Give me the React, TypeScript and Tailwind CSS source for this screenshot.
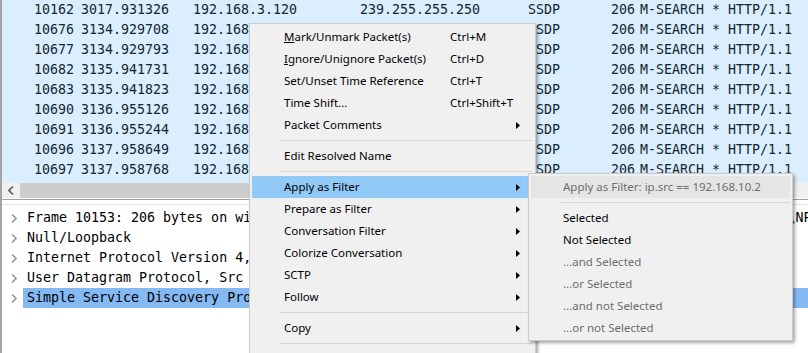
const packets = [
  ["10162", "3017.931326", "192.168.3.120"],
  ["10676", "3134.929708", "192.168.10.2"],
  ["10677", "3134.929793", "192.168.10.2"],
  ["10682", "3135.941731", "192.168.10.2"],
  ["10683", "3135.941823", "192.168.10.2"],
  ["10690", "3136.955126", "192.168.10.2"],
  ["10691", "3136.955244", "192.168.10.2"],
  ["10696", "3137.958649", "192.168.10.2"],
  ["10697", "3137.958768", "192.168.10.2"],
];

const tree = [
  "Frame 10153: 206 bytes on wire (1648 bits), 206 bytes captured (1648 bits) on interface \\Device\\NPF_Loopback, id 0",
  "Null/Loopback",
  "Internet Protocol Version 4, Src: 192.168.10.2, Dst: 239.255.255.250",
  "User Datagram Protocol, Src Port: 62240, Dst Port: 1900",
  "Simple Service Discovery Protocol",
];

type Item =
  | { sep: true }
  | { label: React.ReactNode; shortcut?: string; sub?: boolean; active?: boolean };

const menu: Item[] = [
  { label: <><span className="underline">M</span>ark/Unmark Packet(s)</>, shortcut: "Ctrl+M" },
  { label: <><span className="underline">I</span>gnore/Unignore Packet(s)</>, shortcut: "Ctrl+D" },
  { label: "Set/Unset Time Reference", shortcut: "Ctrl+T" },
  { label: "Time Shift...", shortcut: "Ctrl+Shift+T" },
  { label: "Packet Comments", sub: true },
  { sep: true },
  { label: "Edit Resolved Name" },
  { sep: true },
  { label: "Apply as Filter", sub: true, active: true },
  { label: "Prepare as Filter", sub: true },
  { label: "Conversation Filter", sub: true },
  { label: "Colorize Conversation", sub: true },
  { label: "SCTP", sub: true },
  { label: "Follow", sub: true },
  { sep: true },
  { label: "Copy", sub: true },
  { sep: true },
  { label: "Protocol Preferences", sub: true },
];

const subItems = [
  { label: "Selected", enabled: true },
  { label: "Not Selected", enabled: true },
  { label: "...and Selected", enabled: false },
  { label: "...or Selected", enabled: false },
  { label: "...and not Selected", enabled: false },
  { label: "...or not Selected", enabled: false },
];

function Arrow() {
  return (
    <svg width="4" height="7" viewBox="0 0 4 7" className="shrink-0">
      <path d="M0 0 L4 3.5 L0 7 Z" fill="#000" />
    </svg>
  );
}

function Chevron({ left }: { left?: boolean }) {
  return (
    <svg width="6" height="9" viewBox="0 0 6 9">
      <path
        d={left ? "M5 0.5 L1 4.5 L5 8.5" : "M1 0.5 L5 4.5 L1 8.5"}
        fill="none"
        stroke={left ? "#5a5a5a" : "#9a9a9a"}
        strokeWidth="1.6"
      />
    </svg>
  );
}

export default function App() {
  const mono = "font-['DejaVu_Sans_Mono',monospace] text-[13.3px]";
  const ui = "font-['Noto_Sans',sans-serif] text-[11.5px]";

  return (
    <div className="relative h-[353px] w-[808px] overflow-hidden bg-white">
      <div className="flex h-full flex-col border-l-2 border-[#a3a3a3]">
        {/* packet list */}
        <div className={`h-[183px] overflow-hidden bg-[#daeeff] text-[#12272e] ${mono}`}>
          {packets.map((p) => (
            <div
              key={p[0]}
              className="grid h-5 grid-cols-[72px_119px_167px_168px_83px_29px_1fr] items-center whitespace-nowrap"
            >
              <span className="text-right">{p[0]}</span>
              <span className="pl-[7px]">{p[1]}</span>
              <span>{p[2]}</span>
              <span>239.255.255.250</span>
              <span>SSDP</span>
              <span>206</span>
              <span>M-SEARCH * HTTP/1.1</span>
            </div>
          ))}
        </div>

        {/* horizontal scrollbar */}
        <div className="flex h-[15px] items-center bg-[#f0f0f0]">
          <div className="flex w-[18px] justify-center">
            <Chevron left />
          </div>
          <div className="h-full w-[680px] bg-[#cdcdcd]" />
        </div>

        {/* splitter */}
        <div className="mt-px h-[6px] border-t border-b border-t-[#a0a0a0] border-b-[#e3e3e3] bg-white" />

        {/* details tree */}
        <div className={`flex-1 pt-[3px] text-black ${mono}`}>
          {tree.map((t, i) => (
            <div key={t} className="flex h-5 items-center whitespace-nowrap">
              <div className="flex w-[21px] justify-center pl-[2px]">
                <Chevron />
              </div>
              <div
                className={`flex h-full flex-1 items-center overflow-hidden pl-[4px] ${
                  i === 4 ? "bg-[#84b9f3]" : ""
                }`}
              >
                {t}
              </div>
            </div>
          ))}
        </div>
      </div>

      {/* context menu */}
      <div
        className={`absolute left-[249px] top-[23px] w-[287px] border border-[#cccccc] bg-[#f0f0f0] pt-[2px] shadow-[2px_2px_3px_rgba(0,0,0,0.35)] ${ui}`}
      >
        {menu.map((m, i) =>
          "sep" in m ? (
            <div key={i} className="h-[9px] pt-[4px] pl-[30px] pr-[3px]">
              <div className="h-px bg-[#d5d5d5]" />
            </div>
          ) : (
            <div
              key={i}
              className={`mx-[2px] flex h-[22px] items-center whitespace-nowrap pl-[32px] pr-[13px] text-black ${
                m.active ? "bg-[#91c9f7]" : ""
              }`}
            >
              <span className="w-[166px]">{m.label}</span>
              <span className="flex-1">{m.shortcut}</span>
              {m.sub && <Arrow />}
            </div>
          )
        )}
      </div>

      {/* submenu */}
      <div
        className={`absolute left-[528px] top-[173px] h-[168px] w-[265px] border border-[#cccccc] bg-[#f0f0f0] pt-[2px] shadow-[2px_2px_3px_rgba(0,0,0,0.35)] ${ui}`}
      >
        <div className="mx-[2px] flex h-[22px] items-center whitespace-nowrap bg-[#e5e5e5] pl-[32px] text-[#6d6d6d]">
          Apply as Filter: ip.src == 192.168.10.2
        </div>
        <div className="h-[9px] pt-[4px] pl-[30px] pr-[2px]">
          <div className="h-px bg-[#d5d5d5]" />
        </div>
        {subItems.map((s) => (
          <div
            key={s.label}
            className={`mx-[2px] flex h-[22px] items-center whitespace-nowrap pl-[32px] ${
              s.enabled ? "text-black" : "text-[#6d6d6d]"
            }`}
          >
            {s.label}
          </div>
        ))}
      </div>
    </div>
  );
}
